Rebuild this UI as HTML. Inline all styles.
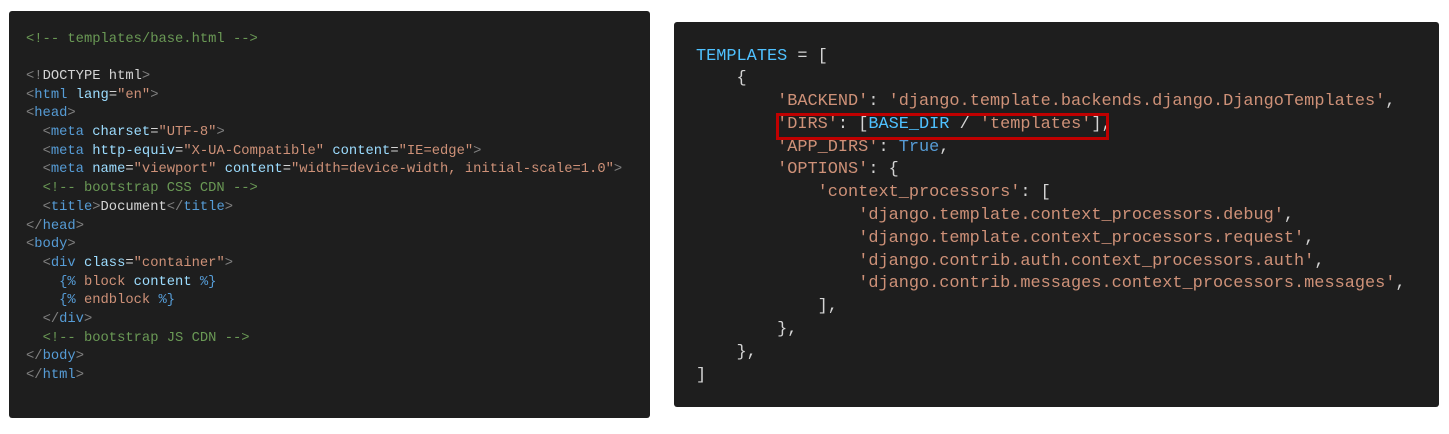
<!DOCTYPE html>
<html><head><style>
body{margin:0;width:1449px;height:434px;background:#fff;position:relative;overflow:hidden}
.p{position:absolute;background:#1e1e1e;border-radius:3px;font-family:"Liberation Mono",monospace;white-space:pre;color:#d4d4d4}
#l{left:9px;top:11px;width:641px;height:407px;font-size:13.8px;line-height:18.7px}
#l .c{position:absolute;left:17px;top:19.5px}
#r{left:674px;top:22px;width:765px;height:385px;font-size:16.9px;line-height:22.8px}
#r .c{position:absolute;left:22px;top:23.5px}
.cm{color:#6a9955}.g{color:#808080}.t{color:#569cd6}.a{color:#9cdcfe}.s{color:#ce9178}.v{color:#4fc1ff}
.box{position:absolute;left:776px;top:113px;width:327px;height:21px;border:3px solid #c00000}
</style></head><body>
<div class="p" id="l"><div class="c"><span class="cm">&lt;!-- templates/base.html --&gt;</span>

<span class="g">&lt;!</span>DOCTYPE html<span class="g">&gt;</span>
<span class="g">&lt;</span><span class="t">html</span> <span class="a">lang</span>=<span class="s">"en"</span><span class="g">&gt;</span>
<span class="g">&lt;</span><span class="t">head</span><span class="g">&gt;</span>
  <span class="g">&lt;</span><span class="t">meta</span> <span class="a">charset</span>=<span class="s">"UTF-8"</span><span class="g">&gt;</span>
  <span class="g">&lt;</span><span class="t">meta</span> <span class="a">http-equiv</span>=<span class="s">"X-UA-Compatible"</span> <span class="a">content</span>=<span class="s">"IE=edge"</span><span class="g">&gt;</span>
  <span class="g">&lt;</span><span class="t">meta</span> <span class="a">name</span>=<span class="s">"viewport"</span> <span class="a">content</span>=<span class="s">"width=device-width, initial-scale=1.0"</span><span class="g">&gt;</span>
  <span class="cm">&lt;!-- bootstrap CSS CDN --&gt;</span>
  <span class="g">&lt;</span><span class="t">title</span><span class="g">&gt;</span>Document<span class="g">&lt;/</span><span class="t">title</span><span class="g">&gt;</span>
<span class="g">&lt;/</span><span class="t">head</span><span class="g">&gt;</span>
<span class="g">&lt;</span><span class="t">body</span><span class="g">&gt;</span>
  <span class="g">&lt;</span><span class="t">div</span> <span class="a">class</span>=<span class="s">"container"</span><span class="g">&gt;</span>
    <span class="t">{%</span> <span class="s">block</span> <span class="a">content</span> <span class="t">%}</span>
    <span class="t">{%</span> <span class="s">endblock</span> <span class="t">%}</span>
  <span class="g">&lt;/</span><span class="t">div</span><span class="g">&gt;</span>
  <span class="cm">&lt;!-- bootstrap JS CDN --&gt;</span>
<span class="g">&lt;/</span><span class="t">body</span><span class="g">&gt;</span>
<span class="g">&lt;/</span><span class="t">html</span><span class="g">&gt;</span></div></div>
<div class="p" id="r"><div class="c"><span class="v">TEMPLATES</span> = [
    {
        <span class="s">'BACKEND'</span>: <span class="s">'django.template.backends.django.DjangoTemplates'</span>,
        <span class="s">'DIRS'</span>: [<span class="v">BASE_DIR</span> / <span class="s">'templates'</span>],
        <span class="s">'APP_DIRS'</span>: <span class="t">True</span>,
        <span class="s">'OPTIONS'</span>: {
            <span class="s">'context_processors'</span>: [
                <span class="s">'django.template.context_processors.debug'</span>,
                <span class="s">'django.template.context_processors.request'</span>,
                <span class="s">'django.contrib.auth.context_processors.auth'</span>,
                <span class="s">'django.contrib.messages.context_processors.messages'</span>,
            ],
        },
    },
]</div></div>
<div class="box"></div>
</body></html>
